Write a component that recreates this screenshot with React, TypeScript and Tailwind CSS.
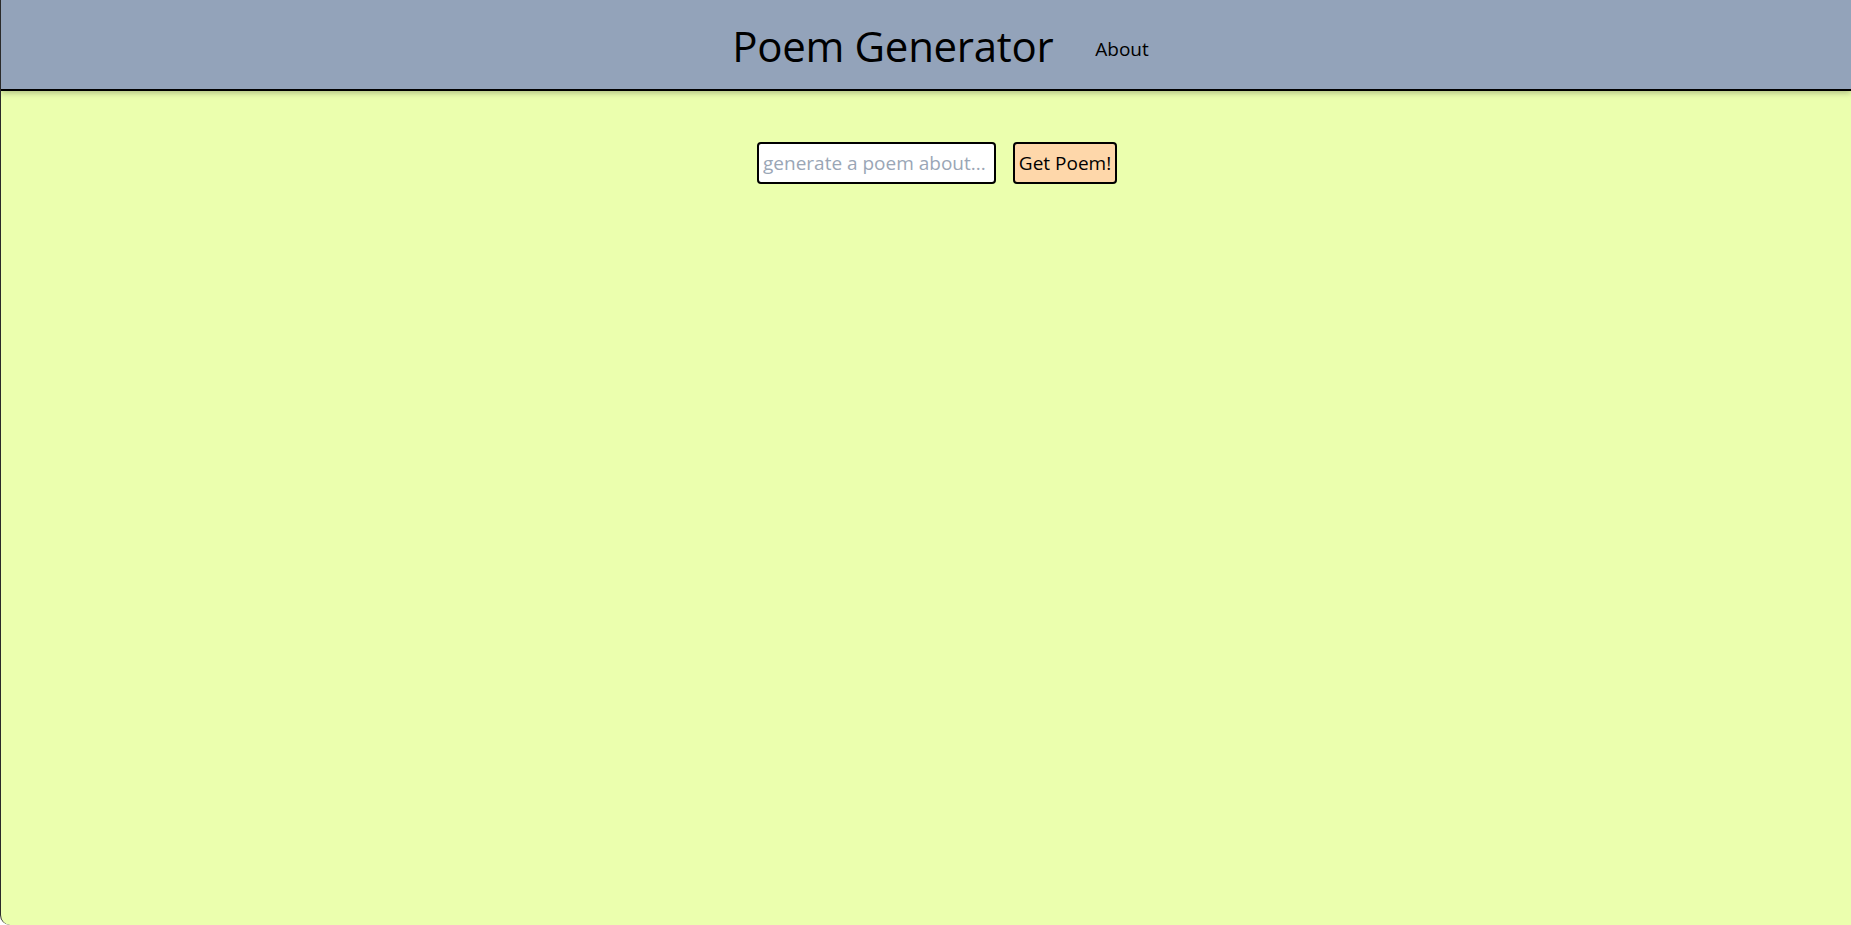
export default function App() {
  return (
    <div className="h-[925px] w-full overflow-hidden border-l border-[#2a2a2a] rounded-bl-[10px] bg-[#ebffae] font-['Open_Sans',sans-serif] text-black">
      <header className="relative z-10 flex h-[91px] items-center justify-center gap-[42px] border-b-2 border-black bg-[#93a3ba] pl-[29px] shadow-[0_2px_6px_rgba(0,0,0,0.25)]">
        <h1 className="pt-[3px] text-[42px] leading-none tracking-[-0.3px]">Poem Generator</h1>
        <a href="#" className="pt-[9px] text-[19px]">About</a>
      </header>
      <main className="flex justify-center gap-[17px] pl-[22px] pt-[51px]">
        <input
          type="text"
          placeholder="generate a poem about..."
          className="h-[42px] w-[239px] rounded-[4px] border-2 border-black bg-white px-[4px] text-[19px] outline-none placeholder:text-[#9aa6b6]"
        />
        <button className="h-[42px] w-[104px] rounded-[4px] border-2 border-black bg-[#fed7aa] text-[19px]">
          Get Poem!
        </button>
      </main>
    </div>
  )
}
